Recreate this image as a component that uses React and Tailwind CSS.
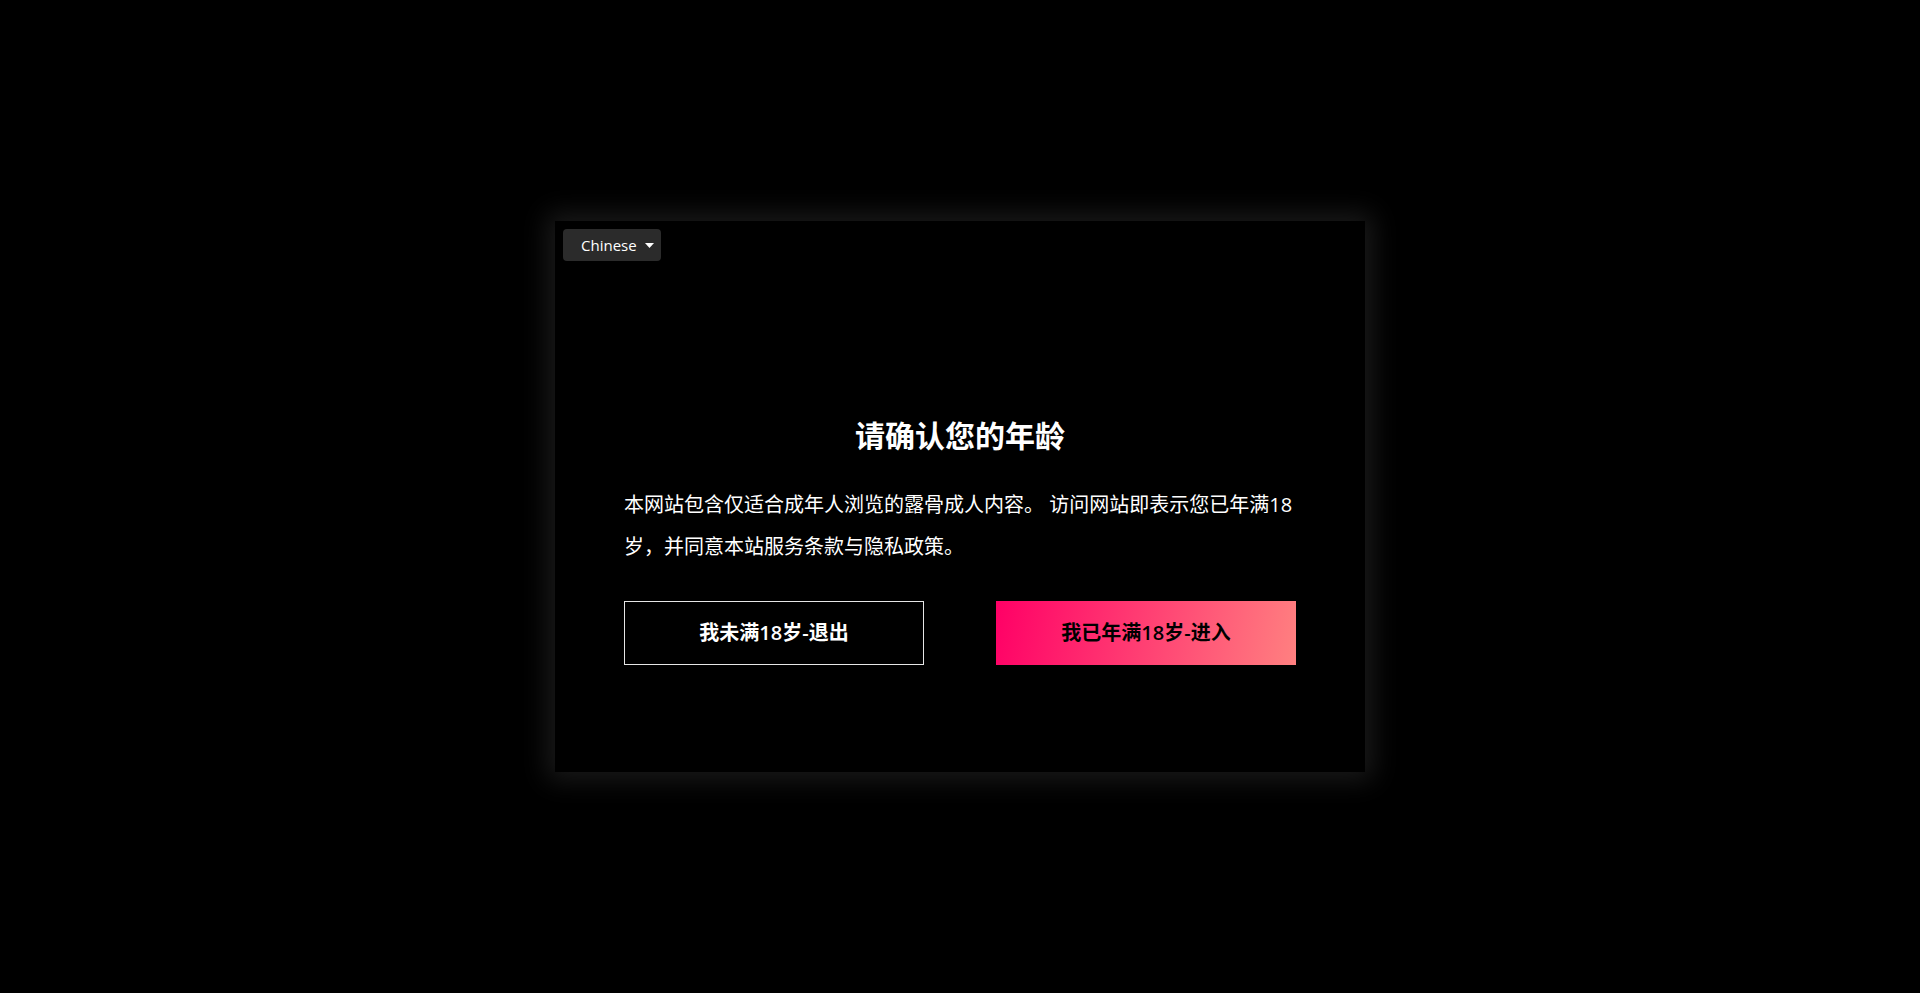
import React from 'react';

function Caret() {
  return (
    <svg width="9" height="5" viewBox="0 0 9 5" className="ml-[8px] fill-white">
      <path d="M0 0h9L4.5 5z" />
    </svg>
  );
}

export default function App() {
  return (
    <div className="flex h-screen w-full items-center justify-center bg-black font-['Open_Sans','Noto_Sans_CJK_SC',sans-serif] text-white">
      <div className="relative h-[551px] w-[810px] bg-black shadow-[0_0_25px_8px_rgba(255,255,255,0.1)]">

        {/* language picker */}
        <button className="absolute left-2 top-2 flex h-8 items-center rounded-[4px] bg-[#2b2b2b] pl-[18px] pr-[7px] text-[15px] font-medium text-white">
          Chinese
          <Caret />
        </button>

        {/* body */}
        <div className="flex flex-col px-[69px] pt-[192px]">
          <h1 className="text-center text-[30px] font-semibold leading-[45px]">请确认您的年龄</h1>

          <p className="mt-[26px] text-[20px] leading-[42px]">
            本网站包含仅适合成年人浏览的露骨成人内容。 访问网站即表示您已年满18岁，并同意本站服务条款与隐私政策。
          </p>

          <div className="mt-[33px] flex justify-between">
            <button className="flex h-16 w-[300px] items-center justify-center border border-white/90 text-[20px] font-semibold text-white">
              我未满18岁-退出
            </button>
            <button className="flex h-16 w-[300px] items-center justify-center bg-[linear-gradient(100deg,#ff0066,#ff8080)] text-[20px] font-semibold text-black">
              我已年满18岁-进入
            </button>
          </div>
        </div>
      </div>
    </div>
  );
}
